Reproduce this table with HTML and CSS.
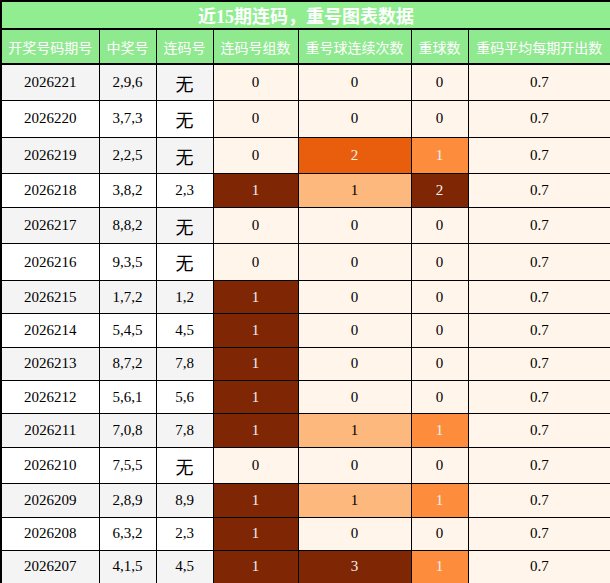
FILE: index.html
```html
<!DOCTYPE html>
<html lang="zh">
<head>
<meta charset="utf-8">
<title>近15期连码，重号图表数据</title>
<link rel="stylesheet" href="styles.css">
</head>
<body>
<table class="stats">
  <colgroup>
    <col class="c-issue"><col class="c-win"><col class="c-pair"><col class="c-groups"><col class="c-rep"><col class="c-ball"><col class="c-avg">
  </colgroup>
  <thead>
    <tr class="title-row"><th colspan="7" class="title">近15期连码，重号图表数据</th></tr>
    <tr class="head-row">
      <th>开奖号码期号</th><th>中奖号</th><th>连码号</th><th>连码号组数</th><th>重号球连续次数</th><th>重球数</th><th>重码平均每期开出数</th>
    </tr>
  </thead>
  <tbody>
    <tr class="w odd"><td class="l">2026221</td><td class="l">2,9,6</td><td class="l wu">无</td><td class="g0">0</td><td class="g0">0</td><td class="g0">0</td><td class="g0">0.7</td></tr>
    <tr class="w"><td class="l">2026220</td><td class="l">3,7,3</td><td class="l wu">无</td><td class="g0">0</td><td class="g0">0</td><td class="g0">0</td><td class="g0">0.7</td></tr>
    <tr class="w odd"><td class="l">2026219</td><td class="l">2,2,5</td><td class="l wu">无</td><td class="g0">0</td><td class="g67">2</td><td class="g50">1</td><td class="g0">0.7</td></tr>
    <tr class="n"><td class="l">2026218</td><td class="l">3,8,2</td><td class="l">2,3</td><td class="g100">1</td><td class="g33">1</td><td class="g100">2</td><td class="g0">0.7</td></tr>
    <tr class="w odd"><td class="l">2026217</td><td class="l">8,8,2</td><td class="l wu">无</td><td class="g0">0</td><td class="g0">0</td><td class="g0">0</td><td class="g0">0.7</td></tr>
    <tr class="w"><td class="l">2026216</td><td class="l">9,3,5</td><td class="l wu">无</td><td class="g0">0</td><td class="g0">0</td><td class="g0">0</td><td class="g0">0.7</td></tr>
    <tr class="n odd"><td class="l">2026215</td><td class="l">1,7,2</td><td class="l">1,2</td><td class="g100">1</td><td class="g0">0</td><td class="g0">0</td><td class="g0">0.7</td></tr>
    <tr class="n"><td class="l">2026214</td><td class="l">5,4,5</td><td class="l">4,5</td><td class="g100">1</td><td class="g0">0</td><td class="g0">0</td><td class="g0">0.7</td></tr>
    <tr class="n odd"><td class="l">2026213</td><td class="l">8,7,2</td><td class="l">7,8</td><td class="g100">1</td><td class="g0">0</td><td class="g0">0</td><td class="g0">0.7</td></tr>
    <tr class="n"><td class="l">2026212</td><td class="l">5,6,1</td><td class="l">5,6</td><td class="g100">1</td><td class="g0">0</td><td class="g0">0</td><td class="g0">0.7</td></tr>
    <tr class="n odd"><td class="l">2026211</td><td class="l">7,0,8</td><td class="l">7,8</td><td class="g100">1</td><td class="g33">1</td><td class="g50">1</td><td class="g0">0.7</td></tr>
    <tr class="w"><td class="l">2026210</td><td class="l">7,5,5</td><td class="l wu">无</td><td class="g0">0</td><td class="g0">0</td><td class="g0">0</td><td class="g0">0.7</td></tr>
    <tr class="n odd"><td class="l">2026209</td><td class="l">2,8,9</td><td class="l">8,9</td><td class="g100">1</td><td class="g33">1</td><td class="g50">1</td><td class="g0">0.7</td></tr>
    <tr class="n"><td class="l">2026208</td><td class="l">6,3,2</td><td class="l">2,3</td><td class="g100">1</td><td class="g0">0</td><td class="g0">0</td><td class="g0">0.7</td></tr>
    <tr class="n odd"><td class="l">2026207</td><td class="l">4,1,5</td><td class="l">4,5</td><td class="g100">1</td><td class="g100">3</td><td class="g50">1</td><td class="g0">0.7</td></tr>
  </tbody>
</table>
</body>
</html>
```
FILE: styles.css
```css
html, body {
  margin: 0;
  padding: 0;
  background: #ffffff;
}

.stats {
  width: 610px;
  table-layout: fixed;
  border-collapse: collapse;
  border: 2px solid #000;
  font-family: "Liberation Serif", "Noto Sans CJK SC", serif;
  font-size: 15px;
  color: #000;
}

.c-issue { width: 98px; }
.c-win { width: 57px; }
.c-pair { width: 57px; }
.c-groups { width: 85px; }
.c-rep { width: 113px; }
.c-ball { width: 57px; }
.c-avg { width: 143px; }

.stats th,
.stats td {
  border: 1px solid #000;
  padding: 0;
  text-align: center;
  vertical-align: middle;
  white-space: nowrap;
}

.title-row { height: 28px; }

.title {
  background: #90ee90;
  color: #fff;
  font-family: "Liberation Serif", "Noto Sans CJK SC", serif;
  font-weight: bold;
  font-size: 18px;
  border-bottom: 2px solid #000 !important;
}

.head-row { height: 35px; }

.head-row th {
  background: #8fe98f;
  color: #fff;
  font-family: "Noto Sans CJK SC", sans-serif;
  font-weight: normal;
  font-size: 14px;
  border-bottom: 2px solid #000;
}

tr.n { height: 33.33px; }
tr.w { height: 36.67px; }

td.l { background: #ffffff; }
tr.odd td.l { background: #f4f4f4; }

td.wu {
  font-family: "Noto Sans CJK SC", sans-serif;
  font-size: 18px;
}

.g0 { background: #fff5eb; color: #000; }
.g33 { background: #fdb97d; color: #000; }
.g50 { background: #fd8d3c; color: #f1f1f1; }
.g67 { background: #e95e0d; color: #f1f1f1; }
.g100 { background: #7f2704; color: #f1f1f1; }
```
